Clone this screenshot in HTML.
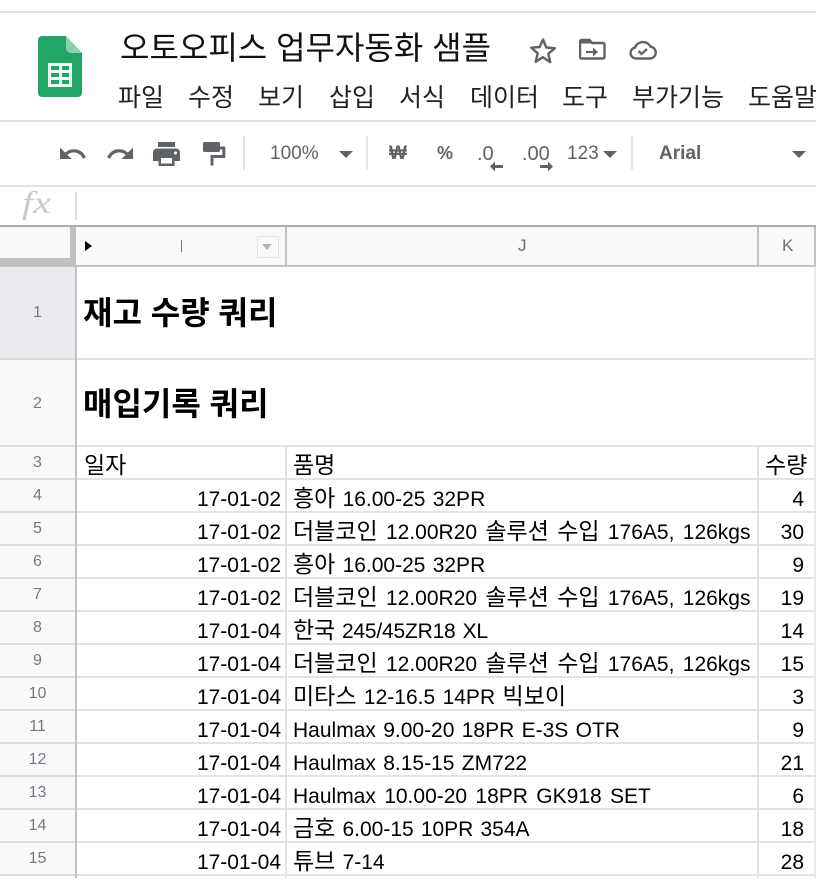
<!DOCTYPE html>
<html lang="ko"><head><meta charset="utf-8"><title>오토오피스 업무자동화 샘플</title>
<style>
html,body{margin:0;padding:0;background:#fff}
body{width:816px;height:878px;overflow:hidden;position:relative;font-family:"Liberation Sans","WenQuanYi Zen Hei","Noto Sans CJK KR",sans-serif;color:#000}
.a{position:absolute;white-space:nowrap}
.l{position:absolute;background:#e2e3e3}
.m{position:absolute;top:83px;font-size:25px;line-height:30px;color:#222;white-space:nowrap}
.tb{position:absolute;color:#5f6368;white-space:nowrap;line-height:24px}
.rh{position:absolute;left:0;width:75px;text-align:center;background:#f8f9fa;color:#77797d;font-size:16px;height:32px;line-height:32px;border-bottom:2px solid #dcdddf;box-sizing:content-box}
.d{position:absolute;left:77px;width:204px;text-align:right;font-size:21px;height:32px;line-height:40px}
.n{position:absolute;left:293px;font-size:21px;line-height:40px;height:32px;white-space:nowrap;word-spacing:1.4px}
.q{position:absolute;left:759px;width:45px;text-align:right;font-size:21px;line-height:40px;height:32px}
.h{font-size:23px;line-height:0}
.w{word-spacing:2.5px}
</style></head><body>

<!-- top bars -->
<div class="l" style="left:0;top:11px;width:816px;height:2px"></div>
<div class="l" style="left:0;top:120px;width:816px;height:2px"></div>
<div class="l" style="left:0;top:185px;width:816px;height:2px"></div>

<!-- logo -->
<svg class="a" style="left:38px;top:36px" width="45" height="62" viewBox="0 0 45 62">
<path d="M4 0H28L44 17V57a4 4 0 0 1-4 4H4a4 4 0 0 1-4-4V4a4 4 0 0 1 4-4Z" fill="#23a566"/>
<path d="M28 0L44 17H33a5 5 0 0 1-5-5Z" fill="#8ed1b1"/>
<rect x="10" y="27" width="24" height="24" fill="#f1f8f5"/>
<path d="M13 30h8v4h-8zM24 30h7v4h-7zM13 37h8v4h-8zM24 37h7v4h-7zM13 44h8v4h-8zM24 44h7v4h-7z" fill="#23a566"/>
</svg>

<div class="a" style="left:120px;top:28px;font-size:32px;line-height:40px;color:#111">오토오피스 업무자동화 샘플</div>

<!-- star, folder, cloud -->
<svg class="a" style="left:528px;top:36px" width="30" height="30" viewBox="0 0 30 30"><path d="M15 3.500l3.300 8 8.500.7-6.500 5.600 2 8.400L15 21.200l-7.300 4.500 2-8.400-6.500-5.600 8.500-.7Z" fill="none" stroke="#5f6368" stroke-width="2.400" stroke-linejoin="round"/></svg>
<svg class="a" style="left:579px;top:37px" width="28" height="24" viewBox="0 0 28 24"><path d="M2.500 3h8l2.500 3h11a1.500 1.500 0 0 1 1.500 1.500V20a1.500 1.500 0 0 1-1.500 1.500H2.500A1.500 1.500 0 0 1 1 20V4.500A1.500 1.500 0 0 1 2.500 3Z" fill="none" stroke="#5f6368" stroke-width="2.400"/><path d="M2 2h8l2.500 4.500H2Z" fill="#5f6368"/><path d="M7 14h7v-3.500l5 4.500-5 4.500V16H7Z" fill="#5f6368"/></svg>
<svg class="a" style="left:629px;top:39px" width="28" height="22" viewBox="0 0 28 22"><path d="M7 19.500a5.500 5.500 0 0 1-1-10.900 8.500 8.500 0 0 1 15.500-1 6 6 0 0 1 0 11.900Z" fill="none" stroke="#5f6368" stroke-width="2.400"/><path d="M9.500 12l3 3 5.500-5" fill="none" stroke="#5f6368" stroke-width="2.400"/></svg>

<!-- menu -->
<div class="m" style="left:118px">파일</div>
<div class="m" style="left:188px">수정</div>
<div class="m" style="left:258px">보기</div>
<div class="m" style="left:329px">삽입</div>
<div class="m" style="left:399px">서식</div>
<div class="m" style="left:470px">데이터</div>
<div class="m" style="left:562px">도구</div>
<div class="m" style="left:632px">부가기능</div>
<div class="m" style="left:748px">도움말</div>

<!-- toolbar -->
<svg class="a" style="left:58px;top:142px" width="30" height="22" viewBox="0 0 30 22"><path d="M2 5.500V17h11.500Z" fill="#5f6368"/><path d="M7 13c5.500-6 15-6 19.500 3" fill="none" stroke="#5f6368" stroke-width="3.200"/></svg>
<svg class="a" style="left:105px;top:142px" width="30" height="22" viewBox="0 0 30 22"><path d="M28 5.500V17H16.500Z" fill="#5f6368"/><path d="M23 13C17.500 7 8 7 3.500 16" fill="none" stroke="#5f6368" stroke-width="3.200"/></svg>
<svg class="a" style="left:152px;top:141px" width="30" height="26" viewBox="0 0 30 26"><path d="M6 1h17v5H6Z" fill="#5f6368"/><path d="M5 7.500h19a4 4 0 0 1 4 4V20h-5.500v5H6.500v-5H1v-8.500a4 4 0 0 1 4-4Z" fill="#5f6368"/><rect x="9" y="17" width="11" height="5.500" fill="#fff"/><circle cx="23.500" cy="12" r="1.500" fill="#fff"/></svg>
<svg class="a" style="left:202px;top:141px" width="24" height="26" viewBox="0 0 24 26"><rect x="1" y="1" width="17" height="10" rx="1.500" fill="#5f6368"/><path d="M18 7h3.800v8.500H10V24.500" fill="none" stroke="#5f6368" stroke-width="3"/></svg>
<div class="a" style="left:243px;top:136px;width:2px;height:34px;background:#e4e5e6"></div>
<div class="tb" style="left:270px;top:142px;font-size:19px">100%</div>
<div class="a" style="left:339px;top:151px;border:7px solid transparent;border-top:7px solid #5f6368;border-bottom:0"></div>
<div class="a" style="left:366px;top:136px;width:2px;height:34px;background:#e4e5e6"></div>
<div class="tb" style="left:389px;top:142px;font-size:19px;font-weight:bold">₩</div>
<div class="tb" style="left:437px;top:141px;font-size:18px;font-weight:bold">%</div>
<div class="tb" style="left:477px;top:142px;font-size:20px">.0</div>
<svg class="a" style="left:489px;top:160px" width="15" height="13" viewBox="0 0 15 13"><path d="M14 5H6V1.500L1 6.500l5 5V8h8Z" fill="#5f6368"/></svg>
<div class="tb" style="left:522px;top:142px;font-size:20px">.00</div>
<svg class="a" style="left:539px;top:160px" width="15" height="13" viewBox="0 0 15 13"><path d="M1 5h8V1.500l5 5-5 5V8H1Z" fill="#5f6368"/></svg>
<div class="tb" style="left:567px;top:142px;font-size:19px">123</div>
<div class="a" style="left:603px;top:151px;border:7px solid transparent;border-top:7px solid #5f6368;border-bottom:0"></div>
<div class="a" style="left:631px;top:136px;width:2px;height:34px;background:#e4e5e6"></div>
<div class="tb" style="left:659px;top:142px;font-size:19px;font-weight:bold">Arial</div>
<div class="a" style="left:792px;top:151px;border:7px solid transparent;border-top:7px solid #5f6368;border-bottom:0"></div>

<!-- formula bar -->
<div class="a" style="left:22px;top:183px;font-family:'Liberation Serif',serif;font-style:italic;font-size:32px;line-height:38px;color:#c9cacb;transform:scaleX(1.25);transform-origin:0 50%">fx</div>
<div class="a" style="left:75px;top:192px;width:2px;height:28px;background:#dcdddd"></div>

<!-- column headers -->
<div class="a" style="left:0;top:225px;width:816px;height:2px;background:#adaeae"></div>
<div class="a" style="left:0;top:227px;width:816px;height:38px;background:#f8f9fa"></div>
<div class="a" style="left:0;top:258px;width:76px;height:7px;background:#c0c1c2"></div>
<div class="a" style="left:70px;top:227px;width:6px;height:38px;background:#c0c1c2"></div>
<div class="a" style="left:0;top:265px;width:816px;height:2px;background:#c0c1c2"></div>
<div class="a" style="left:85px;top:241px;border:5px solid transparent;border-left:7px solid #000;border-right:0"></div>
<div class="a" style="left:181px;top:240px;width:1px;height:12px;background:#777"></div>
<div class="a" style="left:257px;top:236px;width:20px;height:20px;border:1px solid #e3e4e4"></div>
<div class="a" style="left:262px;top:244px;border:5px solid transparent;border-top:6px solid #b5b6b7;border-bottom:0"></div>
<div class="a" style="left:285px;top:227px;width:2px;height:38px;background:#c0c1c2"></div>
<div class="a" style="left:757px;top:227px;width:2px;height:38px;background:#c0c1c2"></div>
<div class="a" style="left:814px;top:227px;width:2px;height:38px;background:#c0c1c2"></div>
<div class="a" style="left:518px;top:236px;font-size:17px;line-height:20px;color:#6e7074">J</div>
<div class="a" style="left:782px;top:236px;font-size:17px;line-height:20px;color:#6e7074">K</div>

<!-- grid vertical lines -->
<div class="a" style="left:285px;top:446px;width:2px;height:432px;background:#e2e3e3"></div>
<div class="a" style="left:757px;top:446px;width:2px;height:432px;background:#e2e3e3"></div>
<div class="a" style="left:814px;top:267px;width:2px;height:611px;background:#e9eaea"></div>

<!-- row headers -->
<div class="rh" style="top:267px;height:91px;line-height:91px;background:#e8eaed;border-bottom-color:#dcdddf">1</div>
<div class="rh" style="top:360px;height:85px;line-height:87px">2</div>
<div class="rh" style="top:447px;height:31px;line-height:31px">3</div>
<div class="rh" style="top:480px;height:31px;line-height:31px">4</div>
<div class="rh" style="top:513px;height:31px;line-height:31px">5</div>
<div class="rh" style="top:546px;height:31px;line-height:31px">6</div>
<div class="rh" style="top:579px;height:31px;line-height:31px">7</div>
<div class="rh" style="top:612px;height:31px;line-height:31px">8</div>
<div class="rh" style="top:645px;height:31px;line-height:31px">9</div>
<div class="rh" style="top:678px;height:31px;line-height:31px">10</div>
<div class="rh" style="top:711px;height:31px;line-height:31px">11</div>
<div class="rh" style="top:744px;height:31px;line-height:31px">12</div>
<div class="rh" style="top:777px;height:31px;line-height:31px">13</div>
<div class="rh" style="top:810px;height:31px;line-height:31px">14</div>
<div class="rh" style="top:843px;height:31px;line-height:31px">15</div>
<div class="a" style="left:75px;top:267px;width:2px;height:611px;background:#c0c1c2"></div>

<!-- horizontal grid lines -->
<div class="l" style="left:77px;top:358px;width:739px;height:2px"></div>
<div class="l" style="left:77px;top:445px;width:739px;height:2px"></div>
<div class="l" style="left:77px;top:478px;width:739px;height:2px"></div>
<div class="l" style="left:77px;top:511px;width:739px;height:2px"></div>
<div class="l" style="left:77px;top:544px;width:739px;height:2px"></div>
<div class="l" style="left:77px;top:577px;width:739px;height:2px"></div>
<div class="l" style="left:77px;top:610px;width:739px;height:2px"></div>
<div class="l" style="left:77px;top:643px;width:739px;height:2px"></div>
<div class="l" style="left:77px;top:676px;width:739px;height:2px"></div>
<div class="l" style="left:77px;top:709px;width:739px;height:2px"></div>
<div class="l" style="left:77px;top:742px;width:739px;height:2px"></div>
<div class="l" style="left:77px;top:775px;width:739px;height:2px"></div>
<div class="l" style="left:77px;top:808px;width:739px;height:2px"></div>
<div class="l" style="left:77px;top:841px;width:739px;height:2px"></div>
<div class="l" style="left:77px;top:874px;width:739px;height:2px"></div>

<!-- headings -->
<div class="a" style="left:83px;top:293px;font-size:32px;line-height:40px;font-weight:bold">재고 수량 쿼리</div>
<div class="a" style="left:83px;top:384px;font-size:32px;line-height:40px;font-weight:bold">매입기록 쿼리</div>

<!-- table -->
<div class="a" style="left:84px;top:447px;font-size:23px;line-height:36px">일자</div>
<div class="a" style="left:293px;top:447px;font-size:23px;line-height:36px">품명</div>
<div class="a" style="left:765px;top:447px;font-size:23px;line-height:36px">수량</div>

<div class="d" style="top:480px">17-01-02</div><div class="n" style="top:480px"><span class="h">흥아</span> 16.00-25 32PR</div><div class="q" style="top:480px">4</div>
<div class="d" style="top:513px">17-01-02</div><div class="n w" style="top:513px"><span class="h">더블코인</span> 12.00R20 <span class="h">솔루션</span> <span class="h">수입</span> 176A5, 126kgs</div><div class="q" style="top:513px">30</div>
<div class="d" style="top:546px">17-01-02</div><div class="n" style="top:546px"><span class="h">흥아</span> 16.00-25 32PR</div><div class="q" style="top:546px">9</div>
<div class="d" style="top:579px">17-01-02</div><div class="n w" style="top:579px"><span class="h">더블코인</span> 12.00R20 <span class="h">솔루션</span> <span class="h">수입</span> 176A5, 126kgs</div><div class="q" style="top:579px">19</div>
<div class="d" style="top:612px">17-01-04</div><div class="n" style="top:612px;word-spacing:1.400px;letter-spacing:-.2px"><span class="h">한국</span> 245/45ZR18 XL</div><div class="q" style="top:612px">14</div>
<div class="d" style="top:645px">17-01-04</div><div class="n w" style="top:645px"><span class="h">더블코인</span> 12.00R20 <span class="h">솔루션</span> <span class="h">수입</span> 176A5, 126kgs</div><div class="q" style="top:645px">15</div>
<div class="d" style="top:678px">17-01-04</div><div class="n" style="top:678px;word-spacing:1.6px"><span class="h">미타스</span> 12-16.5 14PR <span class="h">빅보이</span></div><div class="q" style="top:678px">3</div>
<div class="d" style="top:711px">17-01-04</div><div class="n" style="top:711px;word-spacing:1.5px">Haulmax 9.00-20 18PR E-3S OTR</div><div class="q" style="top:711px">9</div>
<div class="d" style="top:744px">17-01-04</div><div class="n" style="top:744px;word-spacing:1.5px">Haulmax 8.15-15 ZM722</div><div class="q" style="top:744px">21</div>
<div class="d" style="top:777px">17-01-04</div><div class="n" style="top:777px;word-spacing:2.5px">Haulmax 10.00-20 18PR GK918 SET</div><div class="q" style="top:777px">6</div>
<div class="d" style="top:810px">17-01-04</div><div class="n" style="top:810px;word-spacing:1.3px"><span class="h">금호</span> 6.00-15 10PR 354A</div><div class="q" style="top:810px">18</div>
<div class="d" style="top:843px">17-01-04</div><div class="n" style="top:843px"><span class="h">튜브</span> 7-14</div><div class="q" style="top:843px">28</div>

</body></html>
